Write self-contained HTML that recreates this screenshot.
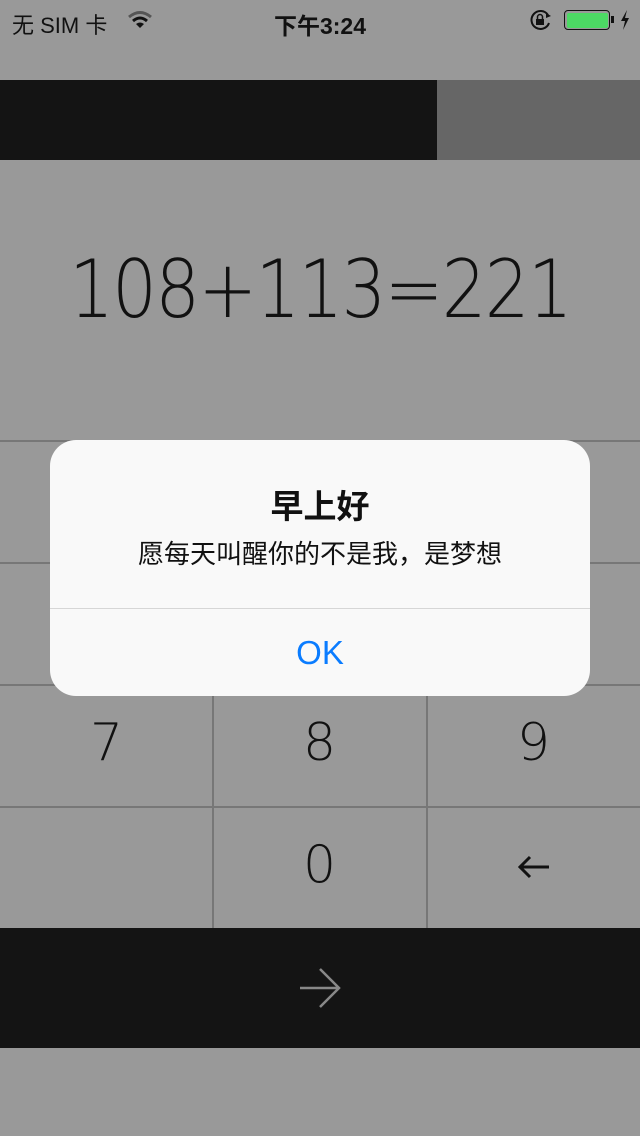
<!DOCTYPE html>
<html><head><meta charset="utf-8"><style>
*{margin:0;padding:0;box-sizing:border-box}
body{width:640px;height:1136px;background:#999;position:relative;overflow:hidden;font-family:"Liberation Sans","Noto Sans CJK SC",sans-serif}
.a{position:absolute}
.hl{position:absolute;left:0;width:640px;height:2px;background:#777}
.vl{position:absolute;width:2px;background:#777}
.k{position:absolute;width:213px;text-align:center;font-size:52px;color:#111;font-family:"DejaVu Sans","Liberation Sans",sans-serif;font-weight:200}
</style></head><body>
<div class="a" style="left:12px;top:8px;font-size:22px;color:#111">无 SIM 卡</div>
<svg class="a" style="left:127px;top:10px" width="26" height="20" viewBox="0 0 26 20"><path d="M2 7 Q13 -2 24 7" stroke="#555" stroke-width="3" fill="none"/><path d="M6 11 Q13 5 20 11" stroke="#111" stroke-width="3" fill="none"/><path d="M13 18 L9 14 Q13 11 17 14Z" fill="#111"/></svg>
<div class="a" style="left:0;width:640px;top:7px;text-align:center;font-size:23px;font-weight:bold;color:#111">下午3:24</div>
<svg class="a" style="left:529px;top:9px" width="24" height="22" viewBox="0 0 24 22"><path d="M19 6 A9 9 0 1 0 20 14" stroke="#111" stroke-width="2" fill="none"/><path d="M17 4 L22 7 L17 9Z" fill="#111"/><rect x="7" y="10" width="8" height="6" fill="#111"/><path d="M8.5 10 V8 a2.5 2.5 0 0 1 5 0 V10" stroke="#111" stroke-width="1.5" fill="none"/></svg>
<div class="a" style="left:564px;top:10px;width:46px;height:20px;border:1.5px solid #111;border-radius:4px;padding:1.5px"><div style="width:100%;height:100%;background:#4cd964;border-radius:2px"></div></div>
<div class="a" style="left:611px;top:16px;width:3px;height:7px;background:#111"></div>
<svg class="a" style="left:619px;top:10px" width="12" height="20" viewBox="0 0 12 20"><path d="M8 0 L2 11 H6 L4 20 L10 8 H6Z" fill="#111"/></svg>
<div class="a" style="left:0;top:80px;width:437px;height:80px;background:#141414"></div>
<div class="a" style="left:437px;top:80px;width:203px;height:80px;background:#666"></div>
<div class="a" style="left:0;width:640px;top:243px;text-align:center;font-size:80px;font-family:'DejaVu Sans',sans-serif;font-weight:200;color:#111;letter-spacing:-2px;transform:scaleX(0.88);transform-origin:320px 0">108+113=221</div>
<div class="hl" style="top:440px"></div><div class="hl" style="top:562px"></div><div class="hl" style="top:684px"></div><div class="hl" style="top:806px"></div>
<div class="vl" style="left:212px;top:440px;height:488px"></div><div class="vl" style="left:426px;top:440px;height:488px"></div>
<div class="k" style="left:0;top:713px">7</div><div class="k" style="left:213px;top:713px">8</div><div class="k" style="left:427px;top:713px">9</div>
<div class="k" style="left:213px;top:835px">0</div>
<svg class="a" style="left:516px;top:852px" width="36" height="30" viewBox="0 0 36 30"><path d="M33 15 H4 M14 5 L4 15 L14 25" stroke="#111" stroke-width="3" fill="none"/></svg>
<div class="a" style="left:0;top:928px;width:640px;height:120px;background:#141414"></div>
<svg class="a" style="left:298px;top:966px" width="44" height="44" viewBox="0 0 44 44"><path d="M2 22 H41 M22 3 L41 22 L22 41" stroke="#888" stroke-width="2.5" fill="none"/></svg>
<div class="a" style="left:50px;top:440px;width:540px;height:256px;background:#f9f9f9;border-radius:26px">
<div class="a" style="left:0;width:540px;top:40px;text-align:center;font-size:33px;font-weight:bold;color:#111">早上好</div>
<div class="a" style="left:0;width:540px;top:94px;text-align:center;font-size:26px;color:#111">愿每天叫醒你的不是我，是梦想</div>
<div class="a" style="left:0;top:168px;width:540px;height:1px;background:#d6d6d6"></div>
<div class="a" style="left:0;width:540px;top:194px;text-align:center;font-size:33px;color:#0a7cff">OK</div>
</div>
</body></html>
